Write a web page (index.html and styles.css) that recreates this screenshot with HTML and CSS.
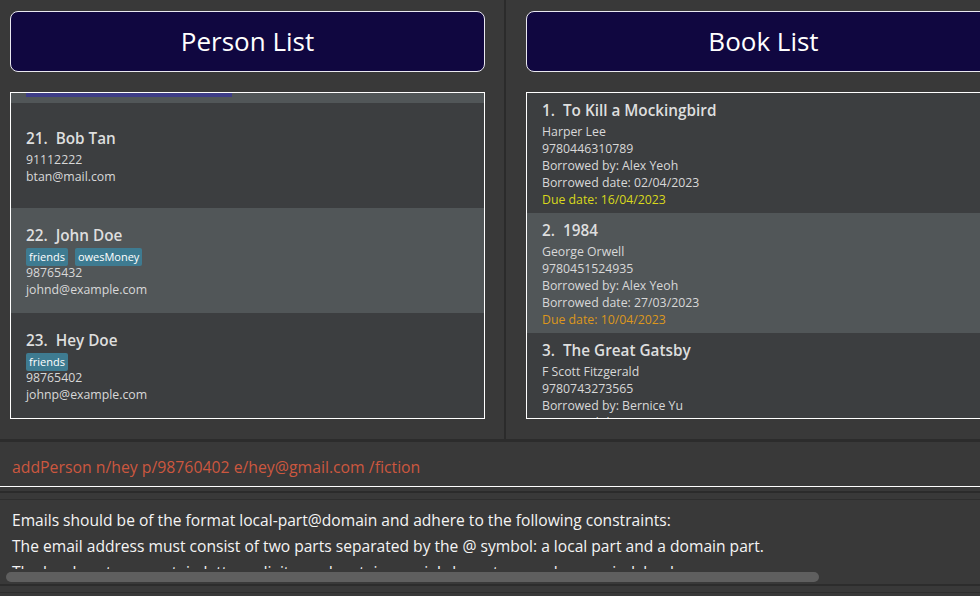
FILE: index.html
```html
<!DOCTYPE html>
<html>
<head>
<meta charset="utf-8">
<link rel="stylesheet" href="styles.css">
</head>
<body>
<div class="app">
  <div class="panels">
    <section class="panel panel-left">
      <div class="panel-title">Person List</div>
      <div class="list">
        <div class="person-row partial alt">
          <span class="tag-long"></span>
        </div>
        <div class="person-row">
          <div class="card">
            <div class="name-line"><span class="idx">21.</span><span class="nm">Bob Tan</span></div>
            <div class="detail">91112222</div>
            <div class="detail">btan@mail.com</div>
          </div>
        </div>
        <div class="person-row alt">
          <div class="card">
            <div class="name-line"><span class="idx">22.</span><span class="nm">John Doe</span></div>
            <div class="tags"><span class="tag">friends</span><span class="tag">owesMoney</span></div>
            <div class="detail">98765432</div>
            <div class="detail">johnd@example.com</div>
          </div>
        </div>
        <div class="person-row">
          <div class="card">
            <div class="name-line"><span class="idx">23.</span><span class="nm">Hey Doe</span></div>
            <div class="tags"><span class="tag">friends</span></div>
            <div class="detail">98765402</div>
            <div class="detail">johnp@example.com</div>
          </div>
        </div>
      </div>
    </section>
    <div class="divider"></div>
    <section class="panel panel-right">
      <div class="panel-title">Book List</div>
      <div class="list">
        <div class="book-row">
          <div class="name-line"><span class="idx">1.</span><span class="nm">To Kill a Mockingbird</span></div>
          <div class="detail">Harper Lee</div>
          <div class="detail">9780446310789</div>
          <div class="detail">Borrowed by: Alex Yeoh</div>
          <div class="detail">Borrowed date: 02/04/2023</div>
          <div class="detail due-soon">Due date: 16/04/2023</div>
        </div>
        <div class="book-row alt">
          <div class="name-line"><span class="idx">2.</span><span class="nm">1984</span></div>
          <div class="detail">George Orwell</div>
          <div class="detail">9780451524935</div>
          <div class="detail">Borrowed by: Alex Yeoh</div>
          <div class="detail">Borrowed date: 27/03/2023</div>
          <div class="detail due-late">Due date: 10/04/2023</div>
        </div>
        <div class="book-row">
          <div class="name-line"><span class="idx">3.</span><span class="nm">The Great Gatsby</span></div>
          <div class="detail">F Scott Fitzgerald</div>
          <div class="detail">9780743273565</div>
          <div class="detail">Borrowed by: Bernice Yu</div>
          <div class="detail">Borrowed date: 20/03/2023</div>
        </div>
      </div>
    </section>
  </div>
  <div class="command">
    <div class="command-text">addPerson n/hey p/98760402 e/hey@gmail.com /fiction</div>
  </div>
  <div class="split-gap"></div>
  <div class="result">
    <div class="result-view">
      <p>Emails should be of the format local-part@domain and adhere to the following constraints:</p>
      <p>The email address must consist of two parts separated by the @ symbol: a local part and a domain part.</p>
      <p>The local-part can contain letters, digits, and certain special characters, such as period, hyphen</p>
    </div>
    <div class="hscroll"><div class="thumb"></div></div>
  </div>
  <div class="status"></div>
</div>
</body>
</html>
```
FILE: styles.css
```css
* { box-sizing: border-box; }
html, body { margin: 0; padding: 0; }
body {
  background: #393939;
  font-family: "Open Sans", "Noto Sans", sans-serif;
  width: 980px;
  height: 596px;
  overflow: hidden;
}
.app { display: flex; flex-direction: column; height: 596px; }

.panels {
  display: flex;
  height: 442px;
  border-bottom: 3px solid #2c2c2c;
  flex: none;
}
.panel { padding-top: 11px; display: flex; flex-direction: column; gap: 20px; }
.panel-left { width: 504px; padding-left: 10px; flex: none; }
.panel-right { padding-left: 20px; flex: none; width: 600px; }
.divider { width: 2px; background: #2b2b2b; flex: none; }

.panel-title {
  width: 475px;
  height: 61px;
  background: #100740;
  border: 1px solid #e9e8f0;
  border-radius: 8px;
  color: #ffffff;
  font-size: 26px;
  display: flex;
  align-items: center;
  justify-content: center;
  padding-bottom: 1px;
}

.list {
  width: 475px;
  height: 327px;
  border: 1px solid #ffffff;
  background: #3c3e40;
  overflow: hidden;
}
.alt { background: #515658; }

.person-row {
  height: 105px;
  padding-left: 15px;
  display: flex;
  align-items: center;
}
.person-row.partial { height: 10px; align-items: flex-start; overflow: hidden; }
.tag-long {
  display: block;
  width: 206px;
  height: 4px;
  background: #3e3d88;
}

.book-row {
  height: 120px;
  padding: 6px 0 0 15px;
}

.name-line {
  font-size: 15.3px;
  font-weight: 600;
  line-height: 22px;
  color: #dedede;
  white-space: nowrap;
  margin-bottom: 2px;
}
.idx { margin-right: 8px; }
.detail {
  font-size: 12.3px;
  line-height: 17px;
  color: #d8d8d8;
  white-space: nowrap;
}
.due-soon { color: #d8d81c; }
.due-late { color: #dc961c; }

.tags { display: flex; gap: 7px; height: 18px; margin-bottom: -2px; }
.tag {
  display: inline-block;
  height: 18px;
  line-height: 18px;
  padding: 0 3px;
  background: #3e7b91;
  color: #ffffff;
  font-size: 11px;
  border-radius: 2px;
  white-space: nowrap;
}

.command {
  height: 45px;
  border-bottom: 1px solid #ffffff;
  padding-left: 12px;
  display: flex;
  align-items: center;
  flex: none;
}
.command-text {
  color: #cc573f;
  font-size: 15.8px;
  padding-top: 6px;
  white-space: nowrap;
}

.split-gap {
  height: 13px;
  flex: none;
  border-top: 4px solid #393939;
  border-bottom: 1px solid #2e2e2e;
  background: #393939;
  box-shadow: inset 0 2px 0 #2b2b2b;
}

.result {
  height: 86px;
  flex: none;
  border-bottom: 2px solid #2c2c2c;
}
.result-view {
  height: 69px;
  overflow: hidden;
  padding: 7px 0 0 12px;
  color: #f4f4f4;
  font-size: 15.6px;
  line-height: 26px;
  white-space: nowrap;
}
.result-view p { margin: 0; }
.hscroll { height: 15px; padding: 3px 0 0 6px; }
.thumb {
  width: 813px;
  height: 10px;
  background: #5f5f5f;
  border-radius: 5px;
}
.status {
  height: 7px;
  flex: none;
  border-top: 5px solid #393939;
  border-bottom: 1px solid #2e2e2e;
}
```
